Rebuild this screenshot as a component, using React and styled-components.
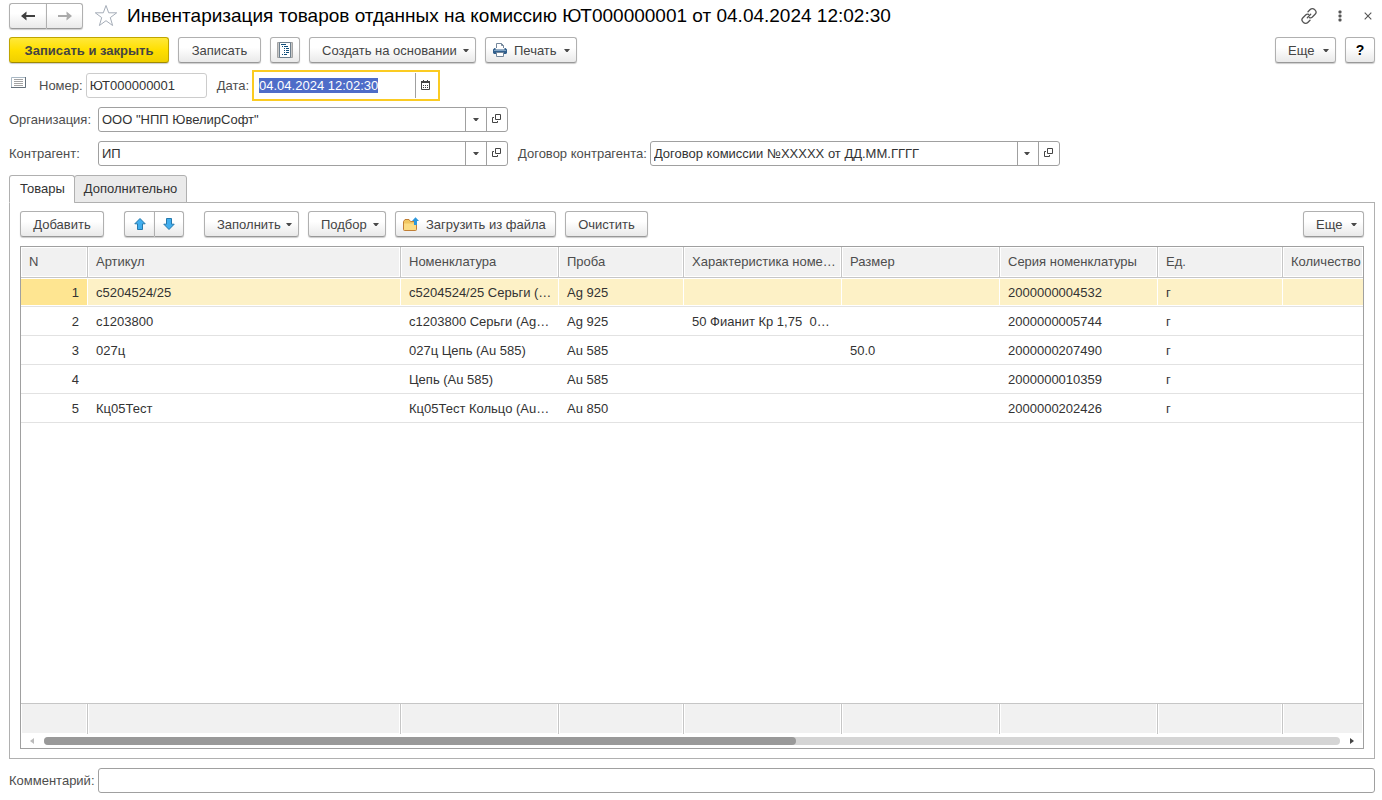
import React, { useEffect, useRef } from 'react';
import styled, { createGlobalStyle, css } from 'styled-components';

const GlobalStyle = createGlobalStyle`
    *, *::before, *::after {
        box-sizing: border-box;
    }
    body {
        margin: 0;
        background: #fff;
    }
    body, button, input {
        font-family: 'Liberation Sans', Arial, sans-serif;
        font-size: 13px;
        color: #333;
    }
`

const columns = [
    { key: 'n', title: 'N', width: 67 },
    { key: 'article', title: 'Артикул', width: 313 },
    { key: 'item', title: 'Номенклатура', width: 158 },
    { key: 'probe', title: 'Проба', width: 125 },
    { key: 'feature', title: 'Характеристика номенклатуры', width: 158 },
    { key: 'size', title: 'Размер', width: 158 },
    { key: 'series', title: 'Серия номенклатуры', width: 158 },
    { key: 'unit', title: 'Ед.', width: 125 },
    { key: 'count', title: 'Количество' },
]

const goods = [
    { n: 1, article: 'с5204524/25', item: 'с5204524/25 Серьги (Ag 925)', probe: 'Ag 925', series: '2000000004532', unit: 'г' },
    { n: 2, article: 'с1203800', item: 'с1203800 Серьги (Ag 925)', probe: 'Ag 925', feature: '50 Фианит Кр 1,75  01 шт', series: '2000000005744', unit: 'г' },
    { n: 3, article: '027ц', item: '027ц Цепь (Au 585)', probe: 'Au 585', size: '50.0', series: '2000000207490', unit: 'г' },
    { n: 4, article: '', item: 'Цепь (Au 585)', probe: 'Au 585', series: '2000000010359', unit: 'г' },
    { n: 5, article: 'Кц05Тест', item: 'Кц05Тест Кольцо (Au 850)', probe: 'Au 850', series: '2000000202426', unit: 'г' },
]

function Caret() {
    return (
        <svg width="6" height="4" viewBox="0 0 6 4" aria-hidden="true">
            <path d="M0 1h6L3.600 4H2.400z" fill="#4a4a4a" />
        </svg>
    )
}

function ArrowLeft() {
    return (
        <svg width="16" height="12" viewBox="0 0 16 12" aria-hidden="true">
            <path d="M3 6h12" fill="none" stroke="#3f3f3f" strokeWidth="2" />
            <path d="M1 6l5.500-4.500v2.800L4.800 6l1.700 1.700v2.800z" fill="#3f3f3f" />
        </svg>
    )
}

function ArrowRight() {
    return (
        <svg width="16" height="12" viewBox="0 0 16 12" aria-hidden="true">
            <path d="M1 6h12" fill="none" stroke="#aaa" strokeWidth="2" />
            <path d="M15 6L9.500 1.500v2.800L11.200 6 9.500 7.700v2.800z" fill="#aaa" />
        </svg>
    )
}

function Star() {
    return (
        <svg width="24" height="23" viewBox="0 0 24 23" aria-hidden="true">
            <path d="M12 1.500l2.700 7.300h8l-6.400 4.800 2.300 7.900-6.600-4.800-6.600 4.800 2.300-7.900L1.300 8.800h8z" fill="#fff" stroke="#a5adb8" />
        </svg>
    )
}

function LinkIcon() {
    return (
        <svg width="18" height="18" viewBox="0 0 18 18" fill="none" stroke="#555" strokeWidth="1.300" strokeLinecap="round" aria-hidden="true">
            <path d="M8 4.800l2.200-2.300a3 3 0 0 1 4.300 0l.6.600a3 3 0 0 1 0 4.200l-3 3q-1.200 1-2.700.3" />
            <path d="M10 13.200l-2.200 2.300a3 3 0 0 1-4.300 0l-.6-.6a3 3 0 0 1 0-4.200l3-3q1.200-1 2.700-.3" />
            <path d="M7.300 10.700l3.400-3.400" />
        </svg>
    )
}

function Dots() {
    return (
        <svg width="4" height="12" viewBox="0 0 4 12" fill="#555" aria-hidden="true">
            <rect x="0.500" y="0.500" width="3" height="3" rx="1" />
            <rect x="0.500" y="4.500" width="3" height="3" rx="1" />
            <rect x="0.500" y="8.500" width="3" height="3" rx="1" />
        </svg>
    )
}

function Cross() {
    return (
        <svg width="8" height="8" viewBox="0 0 8 8" aria-hidden="true">
            <path d="M.7.7l6.600 6.600M7.300.7L.7 7.300" stroke="#555" strokeWidth="1.100" />
        </svg>
    )
}

function ReportIcon() {
    return (
        <svg width="16" height="16" viewBox="0 0 16 16" aria-hidden="true">
            <path d="M.5.5h15v15H.5z" fill="#c9c9c9" stroke="#a5a5a5" />
            <path d="M2.500.5h11v15h-11z" fill="#fff" stroke="#6d7f8d" />
            <path d="M4 2.500h5M5 4.500h1m1 0h4M7 6.500h1m1 0h3M7 8.500h1m1 0h3M7 10.500h1m1 0h3M5 12.500h1m1 0h3" stroke="#0f4f7c" strokeWidth="1.200" />
        </svg>
    )
}

function Printer() {
    return (
        <svg width="14" height="14" viewBox="0 0 14 14" aria-hidden="true">
            <path d="M3.500 5V.5h5l2 2V5" fill="#fff" stroke="#74879b" />
            <path d="M8.500.5v2h2" fill="none" stroke="#74879b" />
            <path d="M1.500 5h1v1.500h9V5h1L14 6.500V10l-1 1H1l-1-1V6.500z" fill="#315f8c" />
            <path d="M1 7.500h12" stroke="#7fa3c4" />
            <path d="M3.500 9.500h7v4h-7z" fill="#fff" stroke="#74879b" />
        </svg>
    )
}

function ListIcon() {
    return (
        <svg width="15" height="11" viewBox="0 0 15 11" aria-hidden="true">
            <path d="M.5.5h14v10H.5z" fill="#fff" stroke="#a9b8c4" />
            <path d="M14.500 0v10.500H0" fill="none" stroke="#64707b" />
            <path d="M3 2.500h9M3 4.500h9M3 6.500h9M3 8.500h9" stroke="#a3a3a3" />
        </svg>
    )
}

function Calendar() {
    return (
        <svg width="9" height="10" viewBox="0 0 9 10" aria-hidden="true">
            <path d="M.5 2h8v7.500h-8z" fill="#fff" stroke="#444" />
            <path d="M0 1h9v2H0zM2 0h1v1H2zM6 0h1v1H6z" fill="#444" />
            <path d="M2 5.500h1m1 0h1m1 0h1M2 7.500h1m1 0h1m1 0h1" stroke="#444" />
        </svg>
    )
}

function OpenIcon() {
    return (
        <svg width="9" height="9" viewBox="0 0 9 9" fill="none" stroke="#444" aria-hidden="true">
            <path d="M3.500.5h5v5h-5z" />
            <path d="M2 3.500H.5v5h5V7" />
        </svg>
    )
}

function MoveArrow({ down }) {
    return (
        <svg width="12" height="12" viewBox="0 0 12 12" aria-hidden="true">
            <path
                d={down ? 'M6 11.500L.8 6.200h2.700V.5h5v5.700h2.700z' : 'M6 .5l5.200 5.300H8.500v5.700h-5V5.800H.8z'}
                fill="#41aeee"
                stroke="#2579ad"
            />
        </svg>
    )
}

function FolderUp() {
    return (
        <svg width="16" height="14" viewBox="0 0 16 14" aria-hidden="true">
            <path d="M.5 12.500v-8l1.500-2h4l1.500 2H12l1.500 1v7q0 1-1 1h-11q-1 0-1-1z" fill="#f0c660" stroke="#c07f36" />
            <path d="M1 6.500h12V12q0 1-1 1H2q-1 0-1-1z" fill="#fbdc84" />
            <path d="M12.500.3L16 4h-2v4h-3V4H9z" fill="#2c97dc" />
        </svg>
    )
}

function Combo({ id, label, value, wide }) {
    return (
        <Field>
            <Label htmlFor={id} $wide={wide}>{label}</Label>
            <ComboBox>
                <ComboInput id={id} defaultValue={value} />
                <InnerButton type="button" aria-label="Выбрать"><Caret /></InnerButton>
                <InnerButton type="button" aria-label="Открыть"><OpenIcon /></InnerButton>
            </ComboBox>
        </Field>
    )
}

function GoodsTable() {
    return (
        <TableFrame>
            <Grid>
                <colgroup>
                    {columns.map(c => <Col key={c.key} $width={c.width} />)}
                </colgroup>
                <thead>
                    <tr>
                        {columns.map(c => <HeadCell key={c.key}>{c.title}</HeadCell>)}
                    </tr>
                </thead>
                <tbody>
                    {goods.map(row => (
                        <Row key={row.n} $selected={row.n === 1}>
                            {columns.map(c => <Cell key={c.key} $number={c.key === 'n'}>{row[c.key]}</Cell>)}
                        </Row>
                    ))}
                    <tr><Filler colSpan={columns.length} /></tr>
                </tbody>
                <tfoot>
                    <tr>
                        {columns.map(c => <FootCell key={c.key} />)}
                    </tr>
                </tfoot>
            </Grid>
            <ScrollBar>
                <svg width="4" height="6" viewBox="0 0 4 6" aria-hidden="true"><path d="M4 0v6L0 3z" fill="#bbb" /></svg>
                <Track><Thumb /></Track>
                <svg width="4" height="6" viewBox="0 0 4 6" aria-hidden="true"><path d="M0 0v6l4-3z" fill="#444" /></svg>
            </ScrollBar>
        </TableFrame>
    )
}

function App() {

    const dateRef = useRef(null);

    useEffect(() => {
        dateRef.current.focus();
        dateRef.current.select();
    }, [])

    return (
        <Page>
            <GlobalStyle />
            <TitleBar>
                <ButtonPair $half={37}>
                    <Button type="button" aria-label="Назад"><ArrowLeft /></Button>
                    <Button type="button" aria-label="Вперед"><ArrowRight /></Button>
                </ButtonPair>
                <IconButton type="button" aria-label="В избранное"><Star /></IconButton>
                <Title>Инвентаризация товаров отданных на комиссию ЮТ000000001 от 04.04.2024 12:02:30</Title>
                <WindowTools>
                    <IconButton type="button" aria-label="Ссылка"><LinkIcon /></IconButton>
                    <IconButton type="button" aria-label="Меню"><Dots /></IconButton>
                    <IconButton type="button" aria-label="Закрыть"><Cross /></IconButton>
                </WindowTools>
            </TitleBar>

            <Toolbar>
                <Button type="button" $primary $width={160}>Записать и закрыть</Button>
                <Button type="button" $width={83}>Записать</Button>
                <Button type="button" $width={30} aria-label="Отчет"><ReportIcon /></Button>
                <Button type="button" $menu $width={167}>Создать на основании<Caret /></Button>
                <Button type="button" $menu $icon $width={91}><Printer />Печать<Caret /></Button>
                <Spacer />
                <Button type="button" $menu $width={61}>Еще<Caret /></Button>
                <Button type="button" $help $width={30}>?</Button>
            </Toolbar>

            <NumberRow>
                <ListMark><ListIcon /></ListMark>
                <Field>
                    <Label htmlFor="number">Номер:</Label>
                    <NumberInput id="number" defaultValue="ЮТ000000001" />
                </Field>
                <Field>
                    <Label htmlFor="date">Дата:</Label>
                    <DateBox>
                        <DateInput id="date" ref={dateRef} defaultValue="04.04.2024 12:02:30" />
                        <InnerButton type="button" aria-label="Календарь"><Calendar /></InnerButton>
                    </DateBox>
                </Field>
            </NumberRow>

            <FieldRow>
                <Combo id="org" label="Организация:" value={'ООО "НПП ЮвелирСофт"'} wide />
            </FieldRow>
            <FieldRow>
                <Combo id="partner" label="Контрагент:" value="ИП" wide />
                <Combo id="contract" label="Договор контрагента:" value="Договор комиссии №XXXXX от ДД.ММ.ГГГГ" />
            </FieldRow>

            <Tabs role="tablist">
                <Tab type="button" role="tab" aria-selected="true" $active>Товары</Tab>
                <Tab type="button" role="tab" aria-selected="false">Дополнительно</Tab>
            </Tabs>
            <Panel role="tabpanel">
                <PanelToolbar>
                    <Button type="button" $width={84}>Добавить</Button>
                    <MoveButtons $half={30}>
                        <Button type="button" aria-label="Вверх"><MoveArrow /></Button>
                        <Button type="button" aria-label="Вниз"><MoveArrow down /></Button>
                    </MoveButtons>
                    <Button type="button" $menu $width={95}>Заполнить<Caret /></Button>
                    <Button type="button" $menu $width={78}>Подбор<Caret /></Button>
                    <Button type="button" $icon $width={161}><FolderUp />Загрузить из файла</Button>
                    <Button type="button" $width={83}>Очистить</Button>
                    <Spacer />
                    <Button type="button" $menu $width={61}>Еще<Caret /></Button>
                </PanelToolbar>
                <GoodsTable />
            </Panel>

            <CommentRow>
                <Label htmlFor="comment" $wide>Комментарий:</Label>
                <CommentInput id="comment" />
            </CommentRow>
        </Page>
    )
}

const Page = styled.div`
    display: flex;
    flex-direction: column;
    min-height: 100vh;
    padding: 3px 7px 7px 9px;
`

const TitleBar = styled.header`
    display: flex;
    align-items: center;
    height: 25px;
`

const Title = styled.h1`
    flex: 1;
    margin: 0 0 0 9px;
    font-size: 19px;
    font-weight: 400;
    line-height: 24px;
    color: #000;
    white-space: nowrap;
`

const WindowTools = styled.div`
    display: flex;
    align-items: center;
    gap: 22px;
    padding-right: 3px;

    & > :first-child {
        margin-right: -2px;
    }
`

const IconButton = styled.button`
    display: flex;
    padding: 0;
    border: 0;
    background: none;
`

const Toolbar = styled.div`
    display: flex;
    gap: 9px;
    margin-top: 9px;
`

const PanelToolbar = styled(Toolbar)`
    margin-top: 8px;
`

const Spacer = styled.div`
    flex: 1;
`

const Button = styled.button`
    display: flex;
    align-items: center;
    justify-content: center;
    min-width: ${props => props.$width}px;
    height: 26px;
    padding: 0;
    border: 1px solid #b0b0b0;
    border-bottom-color: #989898;
    border-radius: 3px;
    background: linear-gradient(#fff 40%, #e9e9e9);
    box-shadow: 0 1px 1px #ccc;
    color: #444;
    white-space: nowrap;

    ${props => props.$menu && css`
        justify-content: space-between;
        padding: 0 6px 0 12px;
    `}
    ${props => props.$icon && css`
        justify-content: flex-start;
        gap: 7px;
        padding: 0 6px 0 7px;
        & > svg:last-child:not(:first-child) {
            margin-left: auto;
        }
    `}
    ${props => props.$primary && css`
        border-color: #bfa500;
        border-bottom-color: #a08a00;
        background: linear-gradient(#ffe83a, #ffdf00 50%, #f0d000);
        font-weight: 700;
    `}
    ${props => props.$help && css`
        color: #000;
        font-size: 14px;
        font-weight: 700;
    `}
`

const ButtonPair = styled.div`
    display: flex;
    margin-right: 11px;

    & > ${Button} {
        width: ${props => props.$half}px;
        min-width: 0;
    }
    & > ${Button}:first-child {
        border-right: 0;
        border-radius: 3px 0 0 3px;
    }
    & > ${Button}:last-child {
        border-radius: 0 3px 3px 0;
    }
`

const MoveButtons = styled(ButtonPair)`
    margin: 0 11px;
`

const Field = styled.div`
    display: flex;
    align-items: center;
`

const Label = styled.label`
    flex: none;
    width: ${props => props.$wide ? '89px' : 'auto'};
    padding-right: ${props => props.$wide ? 0 : '3px'};
    color: #4d4d4d;
    white-space: nowrap;
`

const FieldRow = styled.div`
    display: flex;
    gap: 10px;
    margin-bottom: 9px;
`

const NumberRow = styled(FieldRow)`
    align-items: center;
    margin: 7px 0 6px;
`

const ListMark = styled.span`
    display: flex;
    padding: 0 3px 6px 2px;
`

const inputStyle = css`
    height: 25px;
    min-width: 0;
    padding: 0 4px 0 3px;
    border: 1px solid #a0a0a0;
    border-radius: 3px;
    outline: 0;
    background: #fff;
`

const NumberInput = styled.input`
    ${inputStyle}
    width: 121px;
    border-color: #ccc;
`

const InnerButton = styled.button`
    display: flex;
    flex: none;
    align-items: center;
    justify-content: center;
    width: 21px;
    padding: 0 1px 2px 0;
    border: 0;
    border-left: 1px solid #a0a0a0;
    background: none;
`

const ComboBox = styled.div`
    display: flex;
    width: 410px;
    height: 25px;
    border: 1px solid #a0a0a0;
    border-radius: 3px;
`

const ComboInput = styled.input`
    flex: 1;
    min-width: 0;
    padding: 0 3px;
    border: 0;
    outline: 0;
    background: none;
`

const DateBox = styled.div`
    display: flex;
    width: 188px;
    height: 31px;
    padding: 1px 2px;
    border: 2px solid #fbcb22;
`

const DateInput = styled(ComboInput)`
    &::selection {
        background: #4e6cc8;
        color: #fff;
    }
`

const Tabs = styled.div`
    display: flex;
    margin-bottom: -1px;
`

const Tab = styled.button`
    position: relative;
    height: 28px;
    padding: 0 9px 2px 10px;
    border: 1px solid #b0b0b0;
    border-bottom-color: ${props => props.$active ? '#fff' : '#b0b0b0'};
    border-radius: 3px 3px 0 0;
    background: ${props => props.$active ? '#fff' : '#eaeaea'};

    & + & {
        margin-left: -1px;
        padding: 0 9px 2px;
    }
`

const Panel = styled.section`
    display: flex;
    flex: 1;
    flex-direction: column;
    padding: 0 10px 9px;
    border: 1px solid #b0b0b0;
`

const TableFrame = styled.div`
    display: flex;
    flex: 1;
    flex-direction: column;
    margin-top: 9px;
    border: 1px solid #a0a0a0;
`

const Grid = styled.table`
    flex: 1;
    width: 100%;
    table-layout: fixed;
    border-collapse: separate;
    border-spacing: 0;
`

const Col = styled.col`
    width: ${props => props.$width ? `${props.$width}px` : 'auto'};
`

const HeadCell = styled.th`
    height: 31px;
    padding: 0 5px 2px 8px;
    overflow: hidden;
    border-right: 1px solid #c6c6c6;
    border-bottom: 1px solid #c6c6c6;
    background: #f1f1f1;
    box-shadow: inset 0 0 0 1px #fff;
    color: #4d4d4d;
    font-weight: 400;
    text-align: left;
    text-overflow: ellipsis;
    white-space: nowrap;

    &:last-child {
        padding-right: 0;
        border-right: 0;
    }
`

const Cell = styled.td`
    height: 29px;
    padding: 0 7px 0 8px;
    overflow: hidden;
    border-bottom: 1px solid #e2e2e2;
    text-align: ${props => props.$number ? 'right' : 'left'};
    text-overflow: ellipsis;
    white-space: pre;

    &:first-child {
        padding-right: 9px;
    }
`

const Row = styled.tr`
    ${props => props.$selected && css`
        & > ${Cell} {
            background: #fdf1c6;
            box-shadow: inset 0 1px #fff, inset 0 -1px #fff, inset -1px 0 #fff;
        }
        & > ${Cell}:first-child {
            background: #fee591;
        }
        & > ${Cell}:last-child {
            box-shadow: inset 0 1px #fff, inset 0 -1px #fff;
        }
    `}
`

const Filler = styled.td`
    padding: 0;
`

const FootCell = styled.td`
    height: 31px;
    padding: 0;
    border-top: 1px solid #c6c6c6;
    border-right: 1px solid #c6c6c6;
    background: #f1f1f1;
    box-shadow: inset 1px 0 #fff, inset -1px -1px #fff;

    &:last-child {
        border-right: 0;
    }
`

const ScrollBar = styled.div`
    display: flex;
    align-items: center;
    gap: 10px;
    height: 14px;
    padding: 0 9px;
`

const Track = styled.div`
    flex: 1;
    height: 8px;
    border-radius: 4px;
    background: #d5d5d5;
`

const Thumb = styled.div`
    width: 58%;
    height: 8px;
    border-radius: 4px;
    background: #999;
`

const CommentRow = styled.div`
    display: flex;
    align-items: center;
    margin-top: 9px;
`

const CommentInput = styled.input`
    ${inputStyle}
    flex: 1;
`

export default App
